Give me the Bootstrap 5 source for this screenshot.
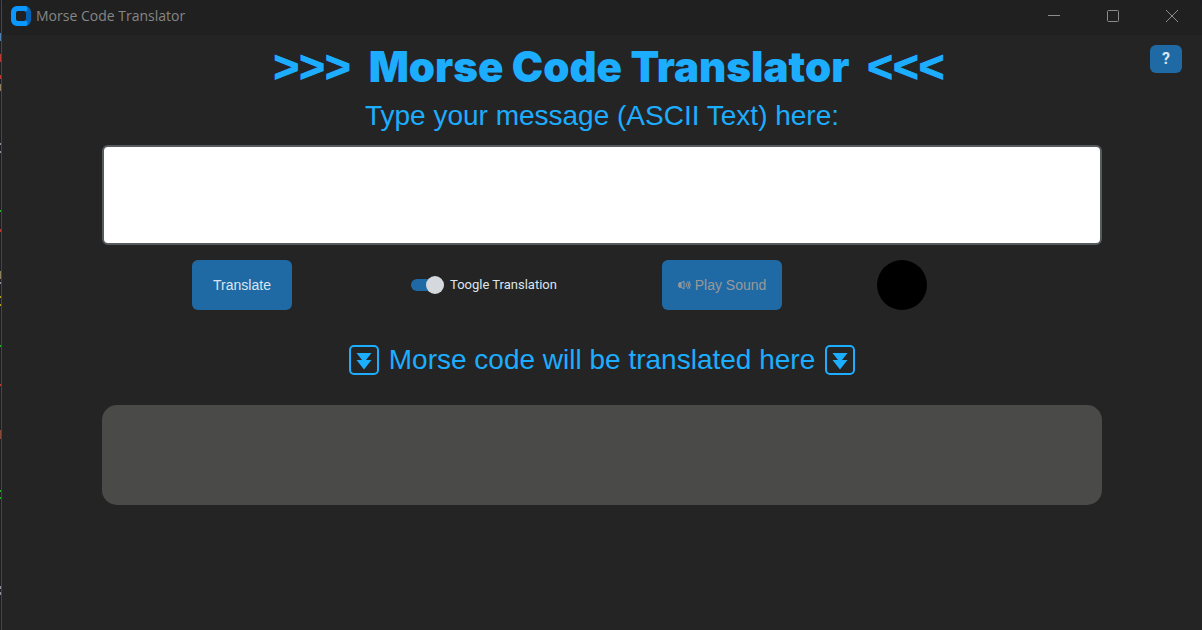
<!DOCTYPE html>
<html lang="en">
<head>
<meta charset="utf-8">
<meta name="viewport" content="width=device-width, initial-scale=1">
<title>Morse Code Translator</title>
<link href="https://cdn.jsdelivr.net/npm/bootstrap@5.3.0/dist/css/bootstrap.min.css" rel="stylesheet">
<style>
  :root { --accent: #1dadff; --btn: #1f6aa5; --surface: #242424; }
  body { background: #1e1e22; font-family: "Liberation Sans", Arial, sans-serif; }
  .backdrop { width: 2px; border-right: 1px solid #46464a; }
  .window { background: var(--surface); min-width: 0; border-radius: 8px 8px 0 0; overflow: hidden; }
  .titlebar { background: #202020; height: 35px; color: #868686; padding: 0 24px 4px 9px; }
  .title-text { font: 14px/20px "Open Sans", "Noto Sans", sans-serif; }
  .win-btn { width: 13px; height: 20px; color: #8c8c8c; }
  .win-btns { gap: 46px; }
  .panel { padding-top: 10px; }
  .help { top: 10px; right: 20px; width: 32px; height: 28px; font: 700 16px/28px Roboto, sans-serif; }
  .btn-app { --bs-btn-bg: var(--btn); --bs-btn-color: #dce4ee; --bs-btn-border-width: 0px;
    --bs-btn-hover-bg: #144870; --bs-btn-hover-color: #dce4ee; --bs-btn-padding-x: 0; --bs-btn-padding-y: 0;
    --bs-btn-border-radius: 6px; --bs-btn-disabled-bg: var(--btn); --bs-btn-disabled-color: #999999;
    --bs-btn-disabled-opacity: 1; --bs-btn-font-size: 14px; }
  .btn-tall { height: 50px; width: 100px; }
  .btn-wide { width: 120px; }
  .app-title { font: 900 42px/44px Inter, sans-serif; color: var(--accent); gap: 18px; margin-bottom: 10px; padding-left: 14px; }
  .arrows { font: 700 44px/44px "Liberation Sans", Arial, sans-serif; -webkit-text-stroke: 1px currentColor; }
  .app-label { font-size: 28px; line-height: 34px; color: var(--accent); }
  .content-col { max-width: 1000px; }
  .message { height: 100px; border: 2px solid #565b5e; border-radius: 6px; resize: none; background: #fff; }
  .controls { display: grid; grid-template-columns: 28fr 20fr 28fr 8fr 16fr; justify-items: center; align-items: center; margin: 15px 0 33px; }
  .toggle-input { appearance: none; position: relative; width: 33px; height: 18px; margin: 0; }
  .toggle-input::before { content: ""; position: absolute; inset: 3px 0; border-radius: 6px; background: var(--btn); }
  .toggle-input::after { content: ""; position: absolute; top: 0; right: 0; width: 18px; height: 18px; border-radius: 50%; background: #d5d9de; }
  .toggle-input:not(:checked)::before { background: #4a4d50; }
  .toggle-input:not(:checked)::after { right: auto; left: 0; }
  .toggle-label { font: 13px/18px Roboto, sans-serif; color: #dce4ee; padding-left: 6px; }
  .lamp { width: 50px; height: 50px; background: #000; }
  .result { height: 100px; border-radius: 15px; background: #4a4a48; margin-top: 28px; }
</style>
</head>
<body>
<div class="d-flex min-vh-100">
  <svg class="backdrop flex-shrink-0 align-self-stretch" height="630" aria-hidden="true">
    <path fill="#4a7fb5" d="M0 33h1v8H0z"/>
    <path fill="#b83a30" d="M0 54h1v8H0zM0 75h1v4H0zM0 229h1v3H0zM0 384h1v2H0z"/>
    <path fill="#8f8060" d="M0 84h1v7H0zM0 271h1v8H0z"/>
    <path fill="#8a929a" d="M0 143h1v2H0zM0 151h1v2H0zM0 282h1v2H0zM0 586h1v3H0zM0 592h1v3H0z"/>
    <path fill="#22b422" d="M0 210h1v2H0zM0 345h1v2H0zM0 490h1v2H0zM0 497h1v2H0z"/>
    <path fill="#b8a020" d="M0 296h1v2H0zM0 304h1v2H0z"/>
    <path fill="#8a4a38" d="M0 430h1v9H0z"/>
  </svg>
  <div class="window flex-grow-1">
    <header class="titlebar d-flex align-items-center justify-content-between">
      <div class="d-flex align-items-center gap-1">
        <svg width="21" height="20" viewBox="0 0 21 20" aria-hidden="true">
          <path fill="#0063b5" d="M14 0a6 6 0 0 1 6 6v8a6 6 0 0 1-6 6z"/>
          <path fill="#0a98ff" d="M6 0h9q1.500 0 1.500 2.500T15 5v10q1.500 0 1.500 2.500T15 20H6a6 6 0 0 1-6-6V6a6 6 0 0 1 6-6z"/>
          <rect x="5" y="5" width="10" height="10" rx="2" fill="#202020"/>
        </svg>
        <span class="title-text">Morse Code Translator</span>
      </div>
      <div class="win-btns d-flex">
        <button class="win-btn btn p-0 border-0 d-flex align-items-center" aria-label="Minimize"><svg width="13" height="13"><path d="M1 6.500h12" stroke="currentColor"/></svg></button>
        <button class="win-btn btn p-0 border-0 d-flex align-items-center" aria-label="Maximize"><svg width="13" height="13"><rect x="1.500" y="1.500" width="11" height="11" rx="1" fill="none" stroke="currentColor"/></svg></button>
        <button class="win-btn btn p-0 border-0 d-flex align-items-center" aria-label="Close"><svg width="13" height="13"><path d="M1 1l12 12M13 1l-12 12" stroke="currentColor"/></svg></button>
      </div>
    </header>
    <main class="panel position-relative">
      <button class="btn btn-app help position-absolute" aria-label="Help">?</button>
      <h1 class="app-title d-flex justify-content-center"><span class="arrows">&gt;&gt;&gt;</span><span>Morse Code Translator</span><span class="arrows">&lt;&lt;&lt;</span></h1>
      <div class="content-col mx-auto">
        <label for="message" class="app-label d-block text-center mb-2 pb-1">Type your message (ASCII Text) here:</label>
        <textarea id="message" class="message form-control"></textarea>
        <div class="controls">
          <button class="btn btn-app btn-tall">Translate</button>
          <div class="d-flex align-items-center ms-1">
            <input type="checkbox" role="switch" id="toggle" class="toggle-input" checked>
            <label for="toggle" class="toggle-label">Toogle Translation</label>
          </div>
          <button class="btn btn-app btn-tall btn-wide d-flex align-items-center justify-content-center gap-1" disabled>
            <svg width="13" height="12" viewBox="0 0 13 12" fill="none" stroke="currentColor" aria-hidden="true"><path d="M1 4h2l3-2v8L3 8H1z"/><path d="M1 4h2v4H1z" fill="currentColor"/><path d="M8 4q1.500 2 0 4M9.500 2.500q2.500 3.500 0 7M11 2q2.500 4 0 8"/></svg>
            <span>Play Sound</span>
          </button>
          <div class="lamp rounded-circle" role="img" aria-label="Signal lamp"></div>
        </div>
        <label for="result" class="app-label d-flex align-items-center justify-content-center gap-2">
          <svg width="34" height="34" viewBox="0 0 34 34" aria-hidden="true"><rect x="3" y="3" width="28" height="28" rx="4" fill="none" stroke="currentColor" stroke-width="2"/><path fill="currentColor" d="M9.500 10h15L19 17h5.500L17 26.500 9.500 17H15z"/></svg>
          <span>Morse code will be translated here</span>
          <svg width="34" height="34" viewBox="0 0 34 34" aria-hidden="true"><rect x="3" y="3" width="28" height="28" rx="4" fill="none" stroke="currentColor" stroke-width="2"/><path fill="currentColor" d="M9.500 10h15L19 17h5.500L17 26.500 9.500 17H15z"/></svg>
        </label>
        <output id="result" class="result d-block"></output>
      </div>
    </main>
  </div>
</div>
<script src="https://cdn.jsdelivr.net/npm/bootstrap@5.3.0/dist/js/bootstrap.bundle.min.js"></script>
</body>
</html>
